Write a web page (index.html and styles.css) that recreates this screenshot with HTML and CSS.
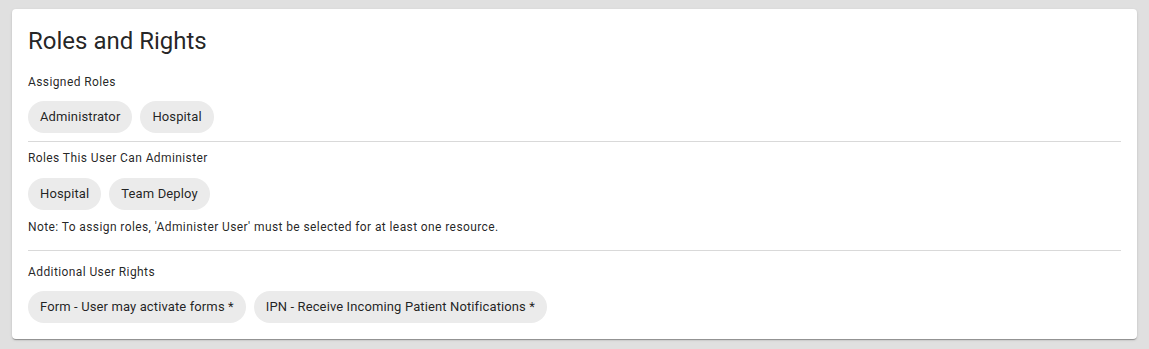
FILE: index.html
```html
<!DOCTYPE html>
<html lang="en">

<head>
    <meta charset="UTF-8">
    <meta name="viewport" content="width=device-width, initial-scale=1.0">
    <title>Roles and Rights</title>
    <link rel="stylesheet" href="styles.css">
</head>

<body>
    <div class="card">
        <h2 class="card-title">Roles and Rights</h2>

        <div class="section section-first">
            <div class="section-label">Assigned Roles</div>
            <div class="chip-list">
                <span class="chip">Administrator</span>
                <span class="chip">Hospital</span>
            </div>
        </div>

        <hr class="divider">

        <div class="section section-admin">
            <div class="section-label">Roles This User Can Administer</div>
            <div class="chip-list">
                <span class="chip">Hospital</span>
                <span class="chip">Team Deploy</span>
            </div>
            <p class="note">Note: To assign roles, 'Administer User' must be selected for at least one resource.</p>
        </div>

        <hr class="divider">

        <div class="section section-rights">
            <div class="section-label">Additional User Rights</div>
            <div class="chip-list">
                <span class="chip">Form - User may activate forms *</span>
                <span class="chip">IPN - Receive Incoming Patient Notifications *</span>
            </div>
        </div>
    </div>
</body>

</html>
```

FILE: styles.css
```css
body {
    font-family: Roboto, "Liberation Sans", sans-serif;
    background-color: #e0e0e0;
    margin: 0;
    padding: 9px 12px;
    color: rgba(0, 0, 0, 0.87);
}

.card {
    background-color: #fff;
    border-radius: 4px;
    padding: 16px;
    box-shadow: 0 2px 1px -1px rgba(0, 0, 0, 0.2), 0 1px 1px 0 rgba(0, 0, 0, 0.14), 0 1px 3px 0 rgba(0, 0, 0, 0.12);
}

.card-title {
    font-size: 24px;
    font-weight: 400;
    line-height: 30px;
    margin: 0 0 18px 0;
    padding-top: 1px;
}

.section-label {
    font-size: 12px;
    line-height: 16px;
    letter-spacing: 0.4px;
}

.chip-list {
    display: flex;
    gap: 8px;
    margin-top: 10px;
}

.chip {
    background-color: #ebebeb;
    border-radius: 16px;
    height: 32px;
    line-height: 32px;
    padding: 0 12px;
    font-size: 13px;
    letter-spacing: 0.12px;
    white-space: nowrap;
}

.section-first {
    padding-bottom: 8px;
}

.section-first .chip-list {
    margin-top: 11px;
}

.section-admin {
    padding-top: 8px;
}

.section-admin .chip-list {
    margin-top: 12px;
}

.note {
    font-size: 12px;
    line-height: 16px;
    letter-spacing: 0.4px;
    margin: 9px 0 15px 0;
}

.section-rights {
    padding-top: 13px;
}

.section-rights .chip-list {
    margin-top: 11px;
}

.divider {
    border: none;
    border-top: 1px solid #d9d9d9;
    margin: 0;
}
```
